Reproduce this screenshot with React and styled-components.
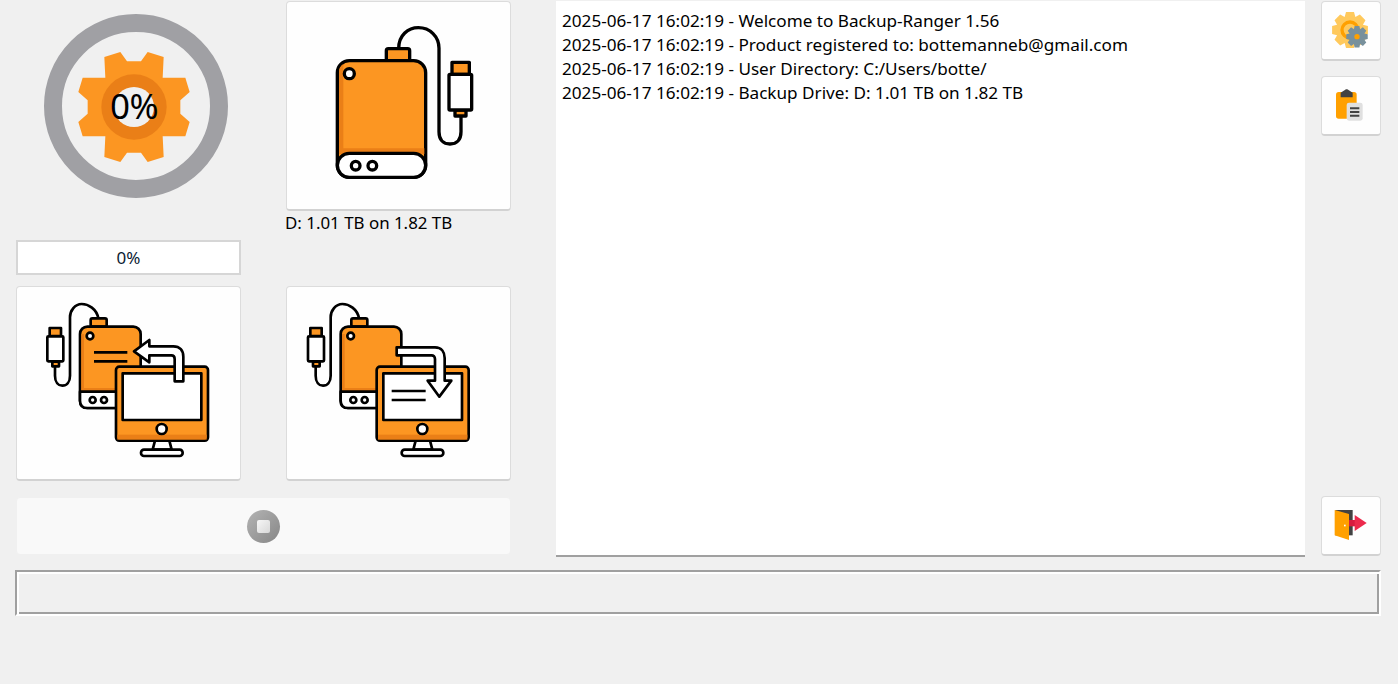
import React from "react";
import styled, { createGlobalStyle } from "styled-components";

const ORANGE = "#fc9622";
const DARK_ORANGE = "#ea7f17";

const GlobalStyle = createGlobalStyle`
  html, body {
    margin: 0;
    height: 100%;
    background: #f0f0f0;
    font-family: "Noto Sans", "Open Sans", sans-serif;
    color: #000;
    overflow: hidden;
  }
`;

const Page = styled.div`
  padding: 1px 17px 0 16px;
`;

const Main = styled.div`
  display: grid;
  grid-template-columns: 540px 749px 75px;
  grid-template-rows: 555px;
`;

const LeftPanel = styled.div`
  display: grid;
  grid-template-columns: 225px 225px;
  column-gap: 45px;
  grid-template-rows: 232px 53px 195px 74px;
`;

const Gauge = styled.div`
  position: relative;
  width: 184px;
  height: 184px;
  margin: 13px 0 0 28px;
`;

const GaugeText = styled.span`
  position: absolute;
  left: -2px;
  top: 0;
  width: 100%;
  line-height: 184px;
  text-align: center;
  font-size: 35px;
  font-weight: 400;
  letter-spacing: -0.5px;
`;

const DriveColumn = styled.div`
  display: flex;
  flex-direction: column;
`;

const DriveLabel = styled.div`
  font-size: 16.9px;
  line-height: 24px;
  margin-left: -1px;
  white-space: nowrap;
`;

const IconButton = styled.button`
  display: block;
  flex: none;
  padding: 0;
  width: ${(p) => p.$w}px;
  height: ${(p) => p.$h}px;
  background: #fefefe;
  border: 1px solid #dcdcdc;
  border-bottom: 2px solid #d2d2d2;
  border-radius: 4px;
  box-sizing: border-box;
  overflow: hidden;
  svg {
    display: block;
    margin: -1px;
  }
`;

const ProgressBox = styled.div`
  align-self: start;
  margin-top: 7px;
  height: 35px;
  box-sizing: border-box;
  background: #fff;
  border: 2px solid #d6d6d6;
  text-align: center;
  font-size: 17px;
  line-height: 31px;
  color: #0b1c33;
`;

const StopButton = styled.button`
  grid-column: 1 / 3;
  margin-top: 16px;
  height: 58px;
  display: flex;
  align-items: center;
  justify-content: center;
  background: #f9f9f9;
  border: 1px solid #f0f0f0;
  border-radius: 4px;
  padding: 0;
`;

const StopCircle = styled.span`
  width: 33px;
  height: 33px;
  border-radius: 50%;
  display: flex;
  align-items: center;
  justify-content: center;
  background: linear-gradient(135deg, #b4b4b4, #868686);
`;

const StopSquare = styled.span`
  width: 13px;
  height: 13px;
  border-radius: 2px;
  background: linear-gradient(135deg, #f6f6f6, #d8d8d8);
`;

const LogPanel = styled.div`
  background: #fff;
  border-bottom: 2px solid #a0a0a0;
  padding: 8px 6px;
  box-sizing: border-box;
  height: 556px;
  font-size: 17.15px;
  line-height: 24px;
  white-space: nowrap;
`;

const SideBar = styled.div`
  display: flex;
  flex-direction: column;
  gap: 15px;
  padding-left: 16px;
  height: 555px;
`;

const Spacer = styled.div`
  flex: 1;
`;

const StatusBar = styled.div`
  margin: 14px 0 0 -1px;
  height: 42px;
  border: 2px solid;
  border-color: #a0a0a0 #fff #fff #a0a0a0;
  box-shadow: inset 2px 2px 0 #fff, inset -2px -2px 0 #a0a0a0;
`;

// outline of the gauge gear, traced on one quarter and mirrored
const quarter = [
  [0, 137], [21, 137], [41, 165], [89, 150], [86, 88],
  [154, 88], [167, 45], [139, 20], [139, 0],
];

const gaugeGearPoints = () => {
  const q1 = quarter.map(([x, y]) => [x, -y]);
  const q2 = [...quarter].reverse().map(([x, y]) => [x, y]);
  const q3 = quarter.map(([x, y]) => [-x, y]);
  const q4 = [...quarter].reverse().map(([x, y]) => [-x, -y]);
  return [...q1, ...q2, ...q3, ...q4]
    .map(([x, y]) => `${x},${y}`)
    .join(" ");
};

const gearPath = (cx, cy, R, r, teeth) => {
  const pts = [];
  const step = (Math.PI * 2) / teeth;
  for (let i = 0; i < teeth; i++) {
    const a = i * step - Math.PI / 2;
    [
      [r, -0.5],
      [R, -0.28],
      [R, 0.28],
      [r, 0.5],
    ].forEach(([rad, o]) => {
      const t = a + o * step;
      pts.push(
        `${(cx + rad * Math.cos(t)).toFixed(1)},${(cy + rad * Math.sin(t)).toFixed(1)}`
      );
    });
  }
  return pts.join(" ");
};

const GaugeSvg = styled.svg`
  display: block;
`;

const GaugeGraphic = () => (
  <GaugeSvg width="184" height="184" viewBox="131 41 552 552">
    <circle cx="407" cy="317" r="249" fill="none" stroke="#a0a0a4" strokeWidth="54" />
    <g transform="translate(401 320)">
      <polygon points={gaugeGearPoints()} fill={ORANGE} />
      <circle r="98" fill={DARK_ORANGE} />
      <circle r="60" fill="#f0f0f0" />
    </g>
  </GaugeSvg>
);

const DriveIcon = () => (
  <svg width="225" height="210" viewBox="18 3 675 630">
    <g stroke="#000" strokeWidth="10" strokeLinejoin="round">
      <path
        d="M356 146 C356 105 385 83 415 83 C450 83 477 110 477 145 V395 C477 420 490 432 510 432 C530 432 543 420 543 395 V348"
        fill="none"
      />
      <rect x="319" y="146" width="70" height="36" rx="6" fill={ORANGE} />
      <rect x="172" y="182" width="265" height="350" rx="36" fill={ORANGE} />
      <path
        d="M177 450 V215 Q177 200 190 192 V445 H433 V462 H177 Z"
        fill={DARK_ORANGE}
        stroke="none"
      />
      <rect x="172" y="460" width="265" height="72" rx="36" fill="#fff" />
      <circle cx="227" cy="497" r="13" fill="#fff" />
      <circle cx="277" cy="497" r="13" fill="#fff" />
      <circle cx="208" cy="221" r="15" fill="#fff" />
      <rect x="516" y="187" width="52" height="36" fill={ORANGE} />
      <rect x="525" y="330" width="33" height="18" fill={ORANGE} />
      <rect x="507" y="223" width="68" height="107" rx="3" fill="#fff" />
    </g>
  </svg>
);

// drive and monitor are the same in both transfer icons, only shifted
const TransferIcon = ({ dx, children }) => (
  <svg width="225" height="195" viewBox="18 6 675 585">
    <g stroke="#000" strokeWidth="8" strokeLinejoin="round" transform={`translate(${dx} 0)`}>
      <path
        d="M265 103 C260 75 235 60 215 60 C195 60 180 80 180 100 V275 C180 295 170 305 157 305 C145 305 135 295 135 275 V248"
        fill="none"
      />
      <rect x="242" y="103" width="48" height="25" rx="5" fill={ORANGE} />
      <rect x="210" y="128" width="182" height="244" rx="22" fill={ORANGE} />
      <path d="M214 315 V150 H222 V312 H388 V325 H214 Z" fill={DARK_ORANGE} stroke="none" />
      <path d="M210 323 H392 V350 Q392 372 370 372 H232 Q210 372 210 350 Z" fill="#fff" />
      <circle cx="248" cy="348" r="9" fill="#fff" />
      <circle cx="282" cy="348" r="9" fill="#fff" />
      <circle cx="240" cy="156" r="10" fill="#fff" />
      <rect x="119" y="132" width="34" height="24" fill={ORANGE} />
      <rect x="127" y="233" width="20" height="14" fill={ORANGE} />
      <rect x="112" y="157" width="48" height="75" rx="3" fill="#fff" />
      <path d="M435 470 L428 497 H485 L478 470 Z" fill="#fff" />
      <rect x="393" y="497" width="125" height="19" rx="9" fill="#fff" />
      <rect x="318" y="248" width="276" height="222" rx="10" fill={ORANGE} />
      <rect x="322" y="452" width="268" height="15" fill={DARK_ORANGE} stroke="none" />
      <rect x="338" y="268" width="236" height="140" fill="#fff" />
      <circle cx="455" cy="435" r="15" fill="#fff" />
      {children}
    </g>
  </svg>
);

const BackupIcon = () => (
  <TransferIcon dx={0}>
    <path d="M252 205 H352 M252 232 H352" fill="none" />
    <path
      d="M372 202 L418 168 V187 H490 C510 187 520 200 520 218 V292 H494 V225 C494 218 490 214 484 214 H418 V235 Z"
      fill="#fff"
    />
  </TransferIcon>
);

const RestoreIcon = () => (
  <TransferIcon dx={-28}>
    <path d="M363 321 H465 M363 348 H465" fill="none" />
    <path
      d="M378 190 H493 C513 190 522 205 522 222 V290 H542 L506 338 L471 290 H493 V225 C493 218 488 214 483 214 H378 Z"
      fill="#fff"
    />
  </TransferIcon>
);

const SettingsIcon = () => (
  <svg width="60" height="60" viewBox="33 3 180 180">
    <polygon points={gearPath(120, 90, 55, 42, 8)} fill="#ffc95c" />
    <circle cx="120" cy="90" r="24" fill="none" stroke="#ffa000" strokeWidth="10" />
    <polygon points={gearPath(141, 110, 33, 24, 8)} fill="#78909c" />
    <circle cx="141" cy="110" r="8" fill="#ffa000" />
  </svg>
);

const ClipboardIcon = () => (
  <svg width="60" height="60" viewBox="33 228 180 180">
    <rect x="78" y="276" width="62" height="80" rx="8" fill="#ffa000" />
    <path d="M92 278 L108 268 H112 L128 278 V292 H92 Z" fill="#424242" />
    <rect x="110" y="308" width="48" height="54" rx="7" fill="#e0e0e0" />
    <path d="M120 325 H148 M120 336 H148 M120 347 H148" stroke="#424242" strokeWidth="6" />
  </svg>
);

const ExitIcon = () => (
  <svg width="60" height="60" viewBox="93 18 180 180">
    <rect x="136" y="60" width="52" height="76" fill="#424242" />
    <polygon points="134,60 177,72 177,150 134,136" fill="#ffa000" />
    <rect x="162" y="104" width="5" height="5" fill="#fff" />
    <rect x="177" y="90" width="20" height="19" fill="#d81b3f" />
    <polygon points="194,75 230,99 194,123" fill="#ec2a4c" />
  </svg>
);

const logLines = [
  "2025-06-17 16:02:19 - Welcome to Backup-Ranger 1.56",
  "2025-06-17 16:02:19 - Product registered to: bottemanneb@gmail.com",
  "2025-06-17 16:02:19 - User Directory: C:/Users/botte/",
  "2025-06-17 16:02:19 - Backup Drive: D: 1.01 TB on 1.82 TB",
];

export default function App() {
  return (
    <Page>
      <GlobalStyle />
      <Main>
        <LeftPanel>
          <Gauge>
            <GaugeGraphic />
            <GaugeText>0%</GaugeText>
          </Gauge>
          <DriveColumn>
            <IconButton $w={225} $h={210}>
              <DriveIcon />
            </IconButton>
            <DriveLabel>D: 1.01 TB on 1.82 TB</DriveLabel>
          </DriveColumn>
          <ProgressBox>0%</ProgressBox>
          <div />
          <IconButton $w={225} $h={195}>
            <BackupIcon />
          </IconButton>
          <IconButton $w={225} $h={195}>
            <RestoreIcon />
          </IconButton>
          <StopButton>
            <StopCircle>
              <StopSquare />
            </StopCircle>
          </StopButton>
        </LeftPanel>
        <LogPanel>
          {logLines.map((line) => (
            <div key={line}>{line}</div>
          ))}
        </LogPanel>
        <SideBar>
          <IconButton $w={60} $h={60}>
            <SettingsIcon />
          </IconButton>
          <IconButton $w={60} $h={60}>
            <ClipboardIcon />
          </IconButton>
          <Spacer />
          <IconButton $w={60} $h={60}>
            <ExitIcon />
          </IconButton>
        </SideBar>
      </Main>
      <StatusBar />
    </Page>
  );
}
